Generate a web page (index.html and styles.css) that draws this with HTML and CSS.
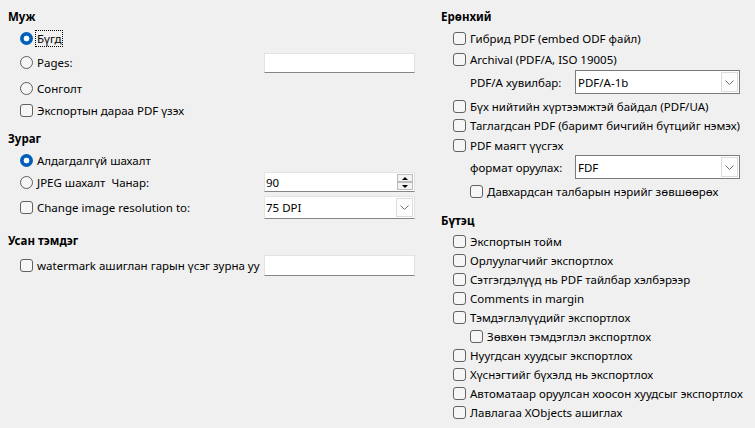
FILE: index.html
```html
<!DOCTYPE html>
<html lang="mn">
<head>
<meta charset="utf-8">
<link rel="stylesheet" href="styles.css">
</head>
<body>
<div class="page">
  <div class="col col-left">
    <div class="heading">Муж</div>
    <div class="opt r22"><span class="radio on"></span><span class="lbl focus">Бүгд</span></div>
    <div class="field r27">
      <div class="opt"><span class="radio"></span><span class="lbl">Pages:</span></div>
      <div class="input"></div>
    </div>
    <div class="opt r25"><span class="radio"></span><span class="lbl">Сонголт</span></div>
    <div class="opt r18"><span class="check"></span><span class="lbl">Экспортын дараа PDF үзэх</span></div>

    <div class="heading sec">Зураг</div>
    <div class="opt r22"><span class="radio on"></span><span class="lbl">Алдагдалгүй шахалт</span></div>
    <div class="field r22">
      <div class="opt"><span class="radio"></span><span class="lbl">JPEG шахалт&nbsp; Чанар:</span></div>
      <div class="input spin"><span class="val">90</span>
        <span class="spin-btns"><span class="sbtn"><span class="tri up"></span></span><span class="sbtn"><span class="tri down"></span></span></span>
      </div>
    </div>
    <div class="field r29">
      <div class="opt"><span class="check"></span><span class="lbl">Change image resolution to:</span></div>
      <div class="combo flat"><span class="val">75 DPI</span><span class="arrow"><svg width="9" height="5" viewBox="0 0 9 5"><path d="M0.5 0.5 L4.5 4.5 L8.5 0.5" fill="none" stroke="#707070" stroke-width="1"/></svg></span></div>
    </div>

    <div class="heading sec2">Усан тэмдэг</div>
    <div class="field r28">
      <div class="opt"><span class="check"></span><span class="lbl">watermark ашиглан гарын үсэг зурна уу</span></div>
      <div class="input wm"></div>
    </div>
  </div>

  <div class="col col-right">
    <div class="heading">Ерөнхий</div>
    <div class="opt r21 first"><span class="check"></span><span class="lbl">Гибрид PDF (embed ODF файл)</span></div>
    <div class="opt r21"><span class="check"></span><span class="lbl">Archival (PDF/A, ISO 19005)</span></div>
    <div class="rfield r27">
      <span class="lbl">PDF/A хувилбар:</span>
      <div class="combo boxed"><span class="val">PDF/A-1b</span><span class="arrow"><svg width="9" height="5" viewBox="0 0 9 5"><path d="M0.5 0.5 L4.5 4.5 L8.5 0.5" fill="none" stroke="#707070" stroke-width="1"/></svg></span></div>
    </div>
    <div class="opt r19"><span class="check"></span><span class="lbl">Бүх нийтийн хүртээмжтэй байдал (PDF/UA)</span></div>
    <div class="opt r19"><span class="check"></span><span class="lbl">Таглагдсан PDF (баримт бичгийн бүтцийг нэмэх)</span></div>
    <div class="opt r20"><span class="check"></span><span class="lbl">PDF маягт үүсгэх</span></div>
    <div class="rfield r25">
      <span class="lbl">формат оруулах:</span>
      <div class="combo boxed"><span class="val">FDF</span><span class="arrow"><svg width="9" height="5" viewBox="0 0 9 5"><path d="M0.5 0.5 L4.5 4.5 L8.5 0.5" fill="none" stroke="#707070" stroke-width="1"/></svg></span></div>
    </div>
    <div class="opt r22 sub"><span class="check"></span><span class="lbl">Давхардсан талбарын нэрийг зөвшөөрөх</span></div>

    <div class="heading sec3">Бүтэц</div>
    <div class="list">
      <div class="opt r19"><span class="check"></span><span class="lbl">Экспортын тойм</span></div>
      <div class="opt r19"><span class="check"></span><span class="lbl">Орлуулагчийг экспортлох</span></div>
      <div class="opt r19"><span class="check"></span><span class="lbl">Сэтгэгдэлүүд нь PDF тайлбар хэлбэрээр</span></div>
      <div class="opt r19"><span class="check"></span><span class="lbl">Comments in margin</span></div>
      <div class="opt r19"><span class="check"></span><span class="lbl">Тэмдэглэлүүдийг экспортлох</span></div>
      <div class="opt r19 sub"><span class="check"></span><span class="lbl">Зөвхөн тэмдэглэл экспортлох</span></div>
      <div class="opt r19"><span class="check"></span><span class="lbl">Нуугдсан хуудсыг экспортлох</span></div>
      <div class="opt r19"><span class="check"></span><span class="lbl">Хүснэгтийг бүхэлд нь экспортлох</span></div>
      <div class="opt r19"><span class="check"></span><span class="lbl">Автоматаар оруулсан хоосон хуудсыг экспортлох</span></div>
      <div class="opt r19"><span class="check"></span><span class="lbl">Лавлагаа XObjects ашиглах</span></div>
    </div>
  </div>
</div>
</body>
</html>
```

FILE: styles.css
```css
* { box-sizing: border-box; }
html, body {
  margin: 0;
  padding: 0;
  background: #f0f0f0;
}
body {
  font-family: "Noto Sans", "Open Sans", sans-serif;
  font-size: 11.5px;
  color: #000;
  width: 755px;
  height: 428px;
  overflow: hidden;
}
.page {
  display: grid;
  grid-template-columns: 407px 315px;
  column-gap: 25px;
  padding: 7px 0 0 8px;
}
.col { display: flex; flex-direction: column; }

.heading {
  height: 20px;
  line-height: 20px;
  font-weight: bold;
  color: #000;
}
.col-right .heading { padding-left: 1px; }
.sec { margin-top: 10px; }
.sec2 { margin-top: 9px; }
.sec3 { margin-top: 9px; }

.opt {
  display: flex;
  align-items: center;
  padding-left: 12px;
  white-space: nowrap;
}
.col-right .opt { padding-left: 13px; }
.col-right .opt.sub { padding-left: 30px; }
.col-right .first { margin-top: 1px; }
.field .opt { height: 100%; }

.r18 { height: 18px; }
.r19 { height: 19px; }
.r20 { height: 20px; }
.r21 { height: 21px; }
.r22 { height: 22px; }
.r25 { height: 25px; }
.r26 { height: 26px; }
.r27 { height: 27px; }
.r28 { height: 28px; }
.r29 { height: 29px; }

.lbl { margin-left: 4px; line-height: 15px; }
.focus {
  outline: 1px dotted #000;
  outline-offset: 0;
  padding: 0 1px;
  margin-left: 3px;
}

.radio {
  width: 13px;
  height: 13px;
  border-radius: 50%;
  border: 1px solid #5d5d5d;
  background: #f6f6f6;
  flex: none;
}
.radio.on {
  border: none;
  background: radial-gradient(circle, #ffffff 0 2.6px, #005fb8 3.2px);
}
.check {
  width: 13px;
  height: 13px;
  border-radius: 3px;
  border: 1px solid #626262;
  background: #f6f6f6;
  flex: none;
}

.field {
  display: grid;
  grid-template-columns: 256px 151px;
  align-items: center;
}
.input {
  height: 20px;
  background: #fff;
  border: 1px solid #e3e3e3;
  border-bottom-color: #868686;
  display: flex;
  align-items: center;
  padding-left: 1px;
  position: relative;
}
.input.wm { height: 21px; }
.val { line-height: 15px; color: #000; }

.spin-btns {
  position: absolute;
  right: 1px;
  top: 1px;
  display: flex;
  flex-direction: column;
}
.sbtn {
  width: 16px;
  height: 8px;
  border: 1px solid #bdbdbd;
  background: #f3f3f3;
  display: flex;
  align-items: center;
  justify-content: center;
}
.tri { width: 0; height: 0; border-left: 3px solid transparent; border-right: 3px solid transparent; }
.tri.up { border-bottom: 3px solid #000; }
.tri.down { border-top: 3px solid #000; }

.combo {
  background: #fff;
  display: flex;
  align-items: center;
  justify-content: space-between;
  padding-left: 1px;
}
.combo.flat {
  height: 23px;
  border: 1px solid #e3e3e3;
  border-bottom-color: #868686;
}
.combo.boxed {
  height: 24px;
  border: 1px solid #7a7a7a;
  padding-left: 2px;
}
.arrow {
  width: 17px;
  height: calc(100% - 2px);
  margin-right: 1px;
  border: 1px solid #dcdcdc;
  background: #fdfdfd;
  display: flex;
  align-items: center;
  justify-content: center;
}

.rfield {
  display: grid;
  grid-template-columns: 105px 165px;
  padding-left: 30px;
  align-items: start;
}
.rfield .lbl { margin-left: 0; height: 24px; display: flex; align-items: center; }
.list { margin-top: 1px; display: flex; flex-direction: column; }
```
